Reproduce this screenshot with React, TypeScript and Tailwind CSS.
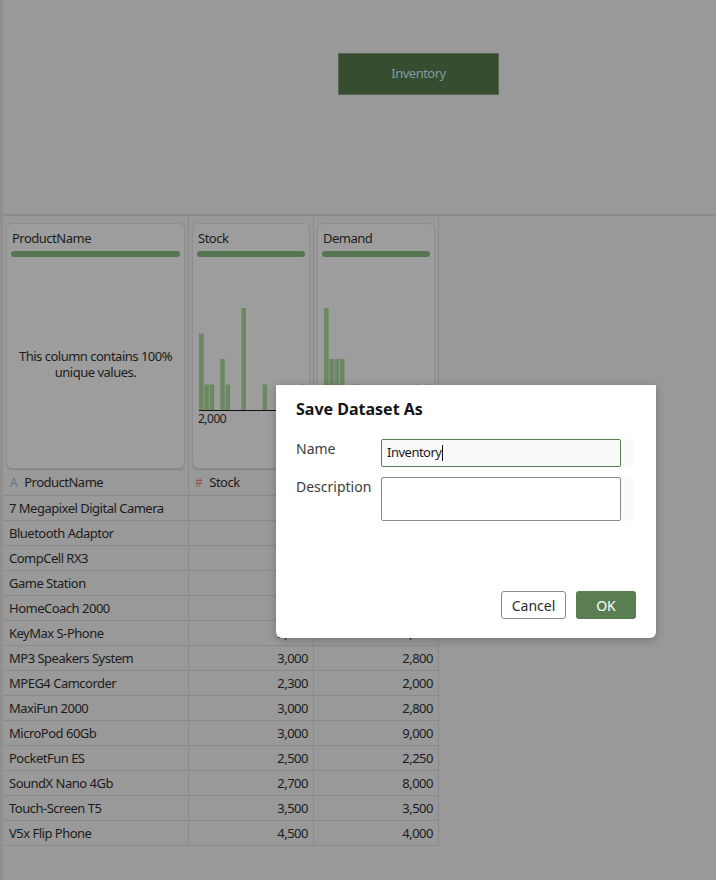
const rows: [string, string, string][] = [
  ["7 Megapixel Digital Camera", "2,000", "2,000"],
  ["Bluetooth Adaptor", "2,100", "1,600"],
  ["CompCell RX3", "2,000", "1,600"],
  ["Game Station", "3,000", "1,600"],
  ["HomeCoach 2000", "2,500", "2,300"],
  ["KeyMax S-Phone", "2,000", "2,000"],
  ["MP3 Speakers System", "3,000", "2,800"],
  ["MPEG4 Camcorder", "2,300", "2,000"],
  ["MaxiFun 2000", "3,000", "2,800"],
  ["MicroPod 60Gb", "3,000", "9,000"],
  ["PocketFun ES", "2,500", "2,250"],
  ["SoundX Nano 4Gb", "2,700", "8,000"],
  ["Touch-Screen T5", "3,500", "3,500"],
  ["V5x Flip Phone", "4,500", "4,000"],
];

const stockBins: [number, number][] = [[0, 3], [1, 1], [2, 1], [4, 2], [5, 1], [8, 4], [12, 1], [19, 1]];
const demandBins: [number, number][] = [[0, 4], [1, 2], [2, 2], [3, 2], [5, 1], [6, 1], [17, 1], [19, 1]];

const Histogram = ({ bins }: { bins: [number, number][] }) => (
  <svg width="108" height="110" className="block">
    {bins.map(([i, n]) => (
      <rect key={i} x={1 + i * 5.3} y={109 - n * 25.5} width="4.6" height={n * 25.5} fill="#6b8862" />
    ))}
    <line x1="1" y1="109.5" x2="108" y2="109.5" stroke="#111" strokeWidth="1" />
  </svg>
);

const Card = ({ title, children }: { title: string; children: React.ReactNode }) => (
  <div className="flex h-[246px] flex-col rounded-md border border-[#8e8e8e] bg-[#9d9d9d] px-[4px] shadow-[0_1px_1px_rgba(0,0,0,0.15)]">
    <div className="pl-px pt-[5px] leading-[18px]">{title}</div>
    <div className="mt-[4px] h-[6px] rounded-full bg-[#567552]" />
    {children}
  </div>
);

export default function App() {
  return (
    <div className="relative h-[880px] w-[716px] overflow-hidden bg-[#999999] font-['Noto_Sans',sans-serif] text-[13px] tracking-[-0.5px] text-[#1c1c1c]">
      <div className="flex h-full flex-col border-l-[3px] border-[#8f8f8f]">
        <div className="h-[216px] shrink-0 border-b-2 border-[#8a8a8a] pl-[335px] pt-[53px]">
          <div className="flex h-[42px] w-[161px] items-center justify-center border border-[#55634f] bg-[#374d30] text-[#7f9ca6]">
            Inventory
          </div>
        </div>

        <div className="grid w-[436px] grid-cols-[186px_125px_125px]">
          <div className="h-[254px] border-r border-[#8a8a8a] px-[3px] pt-[7px]">
            <Card title="ProductName">
              <div className="flex flex-1 items-center justify-center pt-[2px] text-center leading-[16px]">
                This column contains 100%<br />unique values.
              </div>
            </Card>
          </div>
          <div className="h-[254px] border-r border-[#8a8a8a] px-[3px] pt-[7px]">
            <Card title="Stock">
              <div className="mt-[44px] pl-px">
                <Histogram bins={stockBins} />
                <div className="pt-px text-[12px] leading-[14px]">2,000</div>
              </div>
            </Card>
          </div>
          <div className="h-[254px] border-r border-[#8a8a8a] px-[3px] pt-[7px]">
            <Card title="Demand">
              <div className="mt-[44px] pl-px">
                <Histogram bins={demandBins} />
              </div>
            </Card>
          </div>

          <div className="flex h-[26px] items-center gap-[7px] border-r border-b border-[#8a8a8a] pl-[7px] pt-px">
            <span className="text-[12px] text-[#5a7b8b]">A</span>
            <span>ProductName</span>
          </div>
          <div className="flex h-[26px] items-center gap-[7px] border-r border-b border-[#8a8a8a] pl-[6px] pt-px">
            <span className="text-[12px] text-[#9b594f]">#</span>
            <span>Stock</span>
          </div>
          <div className="flex h-[26px] items-center gap-[7px] border-r border-b border-[#8a8a8a] pl-[6px] pt-px">
            <span className="text-[12px] text-[#9b594f]">#</span>
            <span>Demand</span>
          </div>

          {rows.map(([name, stock, demand]) => (
            <div key={name} className="contents">
              <div className="flex h-[25px] items-center border-r border-b border-[#8a8a8a] pl-[6px] pt-px">{name}</div>
              <div className="flex h-[25px] items-center justify-end border-r border-b border-[#8a8a8a] pr-[5px] pt-px">{stock}</div>
              <div className="flex h-[25px] items-center justify-end border-r border-b border-[#8a8a8a] pr-[5px] pt-px">{demand}</div>
            </div>
          ))}
        </div>
      </div>

      <div className="absolute left-[276px] top-[385px] flex h-[253px] w-[380px] flex-col rounded-b-md bg-white px-5 tracking-normal shadow-[0_2px_8px_rgba(0,0,0,0.25)]">
        <div className="pt-[14px] text-[16px] font-bold leading-[20px] text-[#161616]">Save Dataset As</div>
        <div className="mt-[20px] flex">
          <div className="w-[85px] text-[14px] leading-[20px] text-[#3d3d3d]">Name</div>
          <div className="bg-[#fafafa] pr-[12px]">
            <div className="flex h-[28px] w-[240px] items-center rounded-[2px] border border-[#5b7d52] bg-[#fafafa] pl-[5px] tracking-[-0.5px]">
              <span>Inventory</span>
              <span className="ml-px h-[16px] w-px bg-[#111]" />
            </div>
          </div>
        </div>
        <div className="mt-[10px] flex">
          <div className="w-[85px] text-[14px] leading-[20px] text-[#3d3d3d]">Description</div>
          <div className="bg-[#fafafa] pr-[12px]">
            <div className="h-[44px] w-[240px] rounded-[2px] border border-[#8a8a8a] bg-white" />
          </div>
        </div>
        <div className="mt-auto flex justify-end gap-[10px] pb-[19px]">
          <button className="h-[28px] w-[65px] rounded-[3px] border border-[#8a8a8a] bg-white text-[14px] text-[#2b2b2b]">
            Cancel
          </button>
          <button className="h-[28px] w-[60px] rounded-[3px] bg-[#5a7e52] text-[14px] text-white">OK</button>
        </div>
      </div>
    </div>
  );
}
